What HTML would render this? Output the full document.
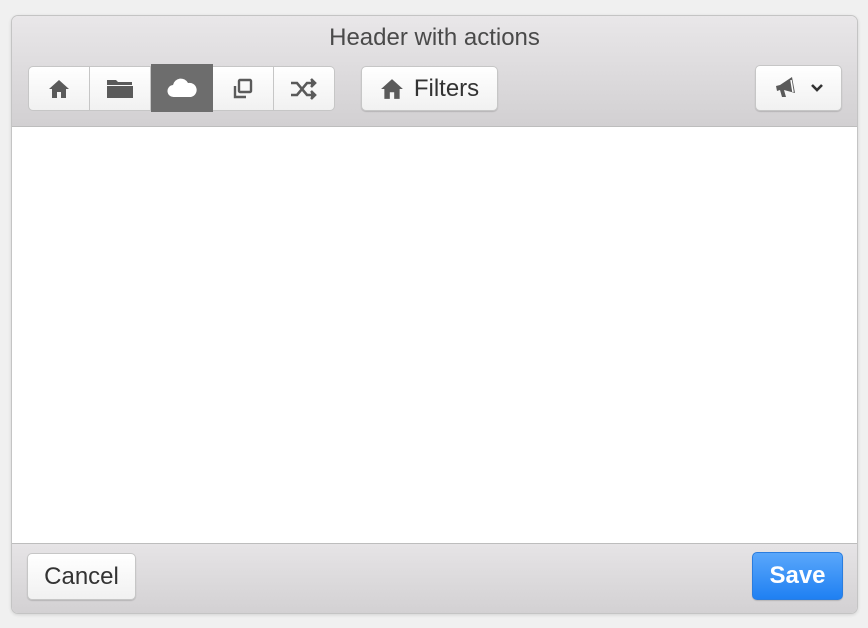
<!DOCTYPE html><html><head><style>
body{margin:0;width:868px;height:628px;background:#f0f0f0;font-family:"Liberation Sans",sans-serif;position:relative;overflow:hidden}
.win{position:absolute;left:11px;top:15px;width:845px;height:597px;border:1px solid #c4c4c4;border-radius:7px;overflow:hidden;box-shadow:0 1px 3px rgba(0,0,0,.12)}
.hdr{position:absolute;left:0;top:0;right:0;height:110px;background:linear-gradient(#e9e7e9,#d2d0d2);border-bottom:1px solid #bdbdbd}
.title{position:absolute;top:8px;width:100%;text-align:center;font-size:24px;color:#4a4a4a}
.content{position:absolute;top:111px;left:0;right:0;height:417px;background:#fff}
.ftr{position:absolute;top:527px;left:0;right:0;bottom:0;background:linear-gradient(#e6e4e6,#d3d1d3);border-top:1px solid #bdbdbd}
.btn{position:absolute;background:linear-gradient(#fff,#f1f1f1);border:1px solid #c6c6c6;border-radius:5px;box-shadow:0 1px 1px rgba(0,0,0,.15);box-sizing:border-box;display:flex;align-items:center;justify-content:center;color:#333;font-size:24px}
.grp{position:absolute;left:16px;top:50px;width:307px;height:45px;display:flex}
.seg{flex:1;height:45px;background:linear-gradient(#fff,#f1f1f1);border:1px solid #c6c6c6;border-left:none;box-sizing:border-box;display:flex;align-items:center;justify-content:center}
.seg:first-child{border-left:1px solid #c6c6c6;border-radius:5px 0 0 5px}
.seg:last-child{border-radius:0 5px 5px 0}
.seg.act{background:#6d6d6d;border-color:#6d6d6d;height:48px;margin-top:-2px}
</style></head><body>
<div class="win">
<div class="hdr"><div class="title">Header with actions</div>
<div class="grp">
<div class="seg"><svg width="22" height="20" viewBox="0 0 22 20"><path d="M11 1L1 10h3v9h5v-6h4v6h5v-9h3z" fill="#5a5a5a"/></svg></div>
<div class="seg"><svg width="28" height="22" viewBox="0 0 28 22"><path d="M1 2h9l2 2h14v3H1zM1 8h26v12H1z" fill="#5a5a5a"/></svg></div>
<div class="seg act"><svg width="30" height="20" viewBox="0 0 30 20"><path d="M7 19a6 6 0 0 1-1-12 8 8 0 0 1 15-2 6 6 0 0 1 3 14z" fill="#fff"/></svg></div>
<div class="seg"><svg width="24" height="24" viewBox="0 0 24 24" fill="none" stroke="#5a5a5a" stroke-width="2.4"><rect x="8" y="3" width="12" height="12" rx="1"/><path d="M4 9v11h11"/></svg></div>
<div class="seg"><svg width="30" height="22" viewBox="0 0 30 22" fill="none" stroke="#5a5a5a" stroke-width="2.6"><path d="M2 5h6l10 12h6M2 17h6l10-12h6"/><path d="M22 1l4 4-4 4M22 13l4 4-4 4" fill="#5a5a5a"/></svg></div>
</div>
<div class="btn" style="left:349px;top:50px;width:137px;height:45px"><svg width="24" height="22" viewBox="0 0 22 20" style="margin-right:10px"><path d="M11 1L1 10h3v9h5v-6h4v6h5v-9h3z" fill="#5a5a5a"/></svg>Filters</div>
<div class="btn" style="left:743px;top:49px;width:87px;height:46px"><svg width="26" height="24" viewBox="0 0 26 24"><path d="M2 10l4-1 12-8 3 16-11-3 2 7h-4l-2-7-3 1z" fill="#5a5a5a"/><path d="M17 4l2 12" stroke="#fff" stroke-width="1.5"/></svg><svg width="14" height="10" viewBox="0 0 14 10" style="margin-left:10px"><path d="M2 2l5 5 5-5" fill="none" stroke="#333" stroke-width="2.6"/></svg></div>
</div>
<div class="content"></div>
<div class="ftr">
<div class="btn" style="left:15px;top:9px;width:109px;height:47px">Cancel</div>
<div class="btn" style="left:740px;top:8px;width:91px;height:48px;background:linear-gradient(#5aa7fb,#1f80f2);border-color:#2a7ddf;color:#fff;font-weight:bold">Save</div>
</div>
</div>
</body></html>
